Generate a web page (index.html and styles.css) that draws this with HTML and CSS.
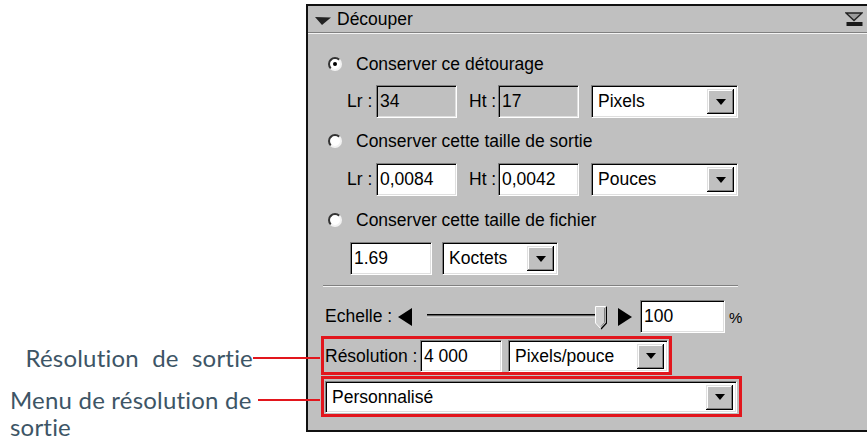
FILE: index.html
```html
<!DOCTYPE html>
<html lang="fr">
<head>
<meta charset="utf-8">
<title>Découper</title>
<link rel="stylesheet" href="styles.css">
</head>
<body>
<div class="page">
  <aside class="callouts">
    <div class="callout callout-res">
      <span class="callout-text">Résolution de sortie</span>
      <span class="callout-line"></span>
    </div>
    <div class="callout callout-menu">
      <span class="callout-text">Menu de résolution de<br>sortie</span>
      <span class="callout-line"></span>
    </div>
  </aside>

  <section class="panel">
    <header class="panel-head">
      <svg class="head-tri" width="16" height="8" viewBox="0 0 16 8"><polygon points="0,0 16,0.5 7,8" fill="#222"/></svg>
      <span class="head-title">Découper</span>
      <svg class="head-menu" width="18" height="15" viewBox="0 0 18 15">
        <path d="M1 1 H17 L9 8.5 Z" fill="#9a9a9a" stroke="#222" stroke-width="1.4" stroke-linejoin="miter"/>
        <rect x="1.5" y="10" width="16" height="4" fill="#1a1a1a"/>
      </svg>
    </header>

    <div class="panel-body">
      <div class="radio-row r1"><span class="radio checked"></span><span>Conserver ce détourage</span></div>
      <div class="field-row f1">
        <span class="flabel">Lr :</span><span class="input disabled w81">34</span>
        <span class="flabel ht">Ht :</span><span class="input disabled w81">17</span>
        <span class="select sel-unit"><span class="sel-text">Pixels</span><span class="sel-btn"></span></span>
      </div>

      <div class="radio-row r2"><span class="radio"></span><span>Conserver cette taille de sortie</span></div>
      <div class="field-row f2">
        <span class="flabel">Lr :</span><span class="input w81">0,0084</span>
        <span class="flabel ht">Ht :</span><span class="input w81">0,0042</span>
        <span class="select sel-unit"><span class="sel-text">Pouces</span><span class="sel-btn"></span></span>
      </div>

      <div class="radio-row r3"><span class="radio"></span><span>Conserver cette taille de fichier</span></div>
      <div class="field-row f3">
        <span class="input w82">1.69</span>
        <span class="select sel-size"><span class="sel-text">Koctets</span><span class="sel-btn"></span></span>
      </div>
    </div>

    <div class="separator"></div>

    <div class="panel-lower">
      <div class="scale-row">
        <span class="scale-label">Echelle :</span>
        <svg class="arrow-left" width="14" height="18" viewBox="0 0 14 18"><polygon points="14,0 14,18 0,9" fill="#000"/></svg>
        <svg class="slider" width="180" height="24" viewBox="0 0 180 24">
          <rect x="0" y="8" width="172" height="1" fill="#000"/>
          <rect x="0" y="9" width="172" height="1.5" fill="#606060"/>
          <rect x="0" y="10.5" width="172" height="1" fill="#e8e8e8"/>
          <polygon points="168.5,0.5 179.5,0.5 179.5,17 174,23 168.5,17" fill="#d0d0d0" stroke="#fff" stroke-width="1"/>
          <polyline points="179.5,0.5 179.5,17 174,23" fill="none" stroke="#000" stroke-width="1.3"/>
          <polyline points="177.5,2 177.5,16.5 174,20.5" fill="none" stroke="#808080" stroke-width="1"/>
        </svg>
        <svg class="arrow-right" width="14" height="18" viewBox="0 0 14 18"><polygon points="0,0 0,18 14,9" fill="#000"/></svg>
        <span class="input w85">100</span>
        <span class="pct">%</span>
      </div>

      <div class="redbox rb1">
        <span class="flabel res">Résolution :</span>
        <span class="input w82">4 000</span>
        <span class="select sel-res"><span class="sel-text">Pixels/pouce</span><span class="sel-btn"></span></span>
      </div>

      <div class="redbox rb2">
        <span class="select sel-menu"><span class="sel-text">Personnalisé</span><span class="sel-btn"></span></span>
      </div>
    </div>
  </section>
</div>
</body>
</html>
```

FILE: styles.css
```css
* { box-sizing: border-box; }

body {
  margin: 0;
  background: #ffffff;
  font-family: "Liberation Sans", Arial, sans-serif;
  font-size: 17.5px;
  color: #000;
}

.page {
  display: flex;
  width: 867px;
  height: 446px;
  overflow: hidden;
}

/* ---------- callouts ---------- */
.callouts {
  width: 306px;
  flex: none;
  display: flex;
  flex-direction: column;
  position: relative;
  z-index: 2;
  font-family: "Lato", "Open Sans", sans-serif;
  font-size: 24px;
  letter-spacing: 0.2px;
  line-height: 27px;
  color: #3d5566;
}

.callout {
  display: flex;
  margin-right: -14px;
}

.callout-line {
  height: 2px;
  background: #e2161d;
  flex: none;
}

.callout-res {
  margin-top: 344px;
  align-items: center;
  justify-content: flex-end;
  word-spacing: 7px;
}

.callout-res .callout-line { width: 67px; }

.callout-menu {
  margin-top: 15px;
  align-items: flex-start;
  justify-content: space-between;
  padding-left: 10px;
}

.callout-menu .callout-line {
  width: 62px;
  margin-top: 13px;
}

/* ---------- panel ---------- */
.panel {
  flex: 1;
  margin-top: 4px;
  height: 428px;
  background: #c0c0c0;
  border: 2px solid #111;
  border-right: none;
  display: flex;
  flex-direction: column;
}

.panel-head {
  height: 27px;
  display: flex;
  align-items: center;
  padding: 1px 4px 0 7px;
  border-bottom: 1px solid #808080;
  box-shadow: 0 1px 0 #f4f4f4;
}

.head-tri { margin-top: 2px; }

.head-title {
  margin-left: 6px;
}

.head-menu { margin-left: auto; }

.panel-body {
  padding-left: 20px;
  display: flex;
  flex-direction: column;
}

.radio-row {
  height: 20px;
  display: flex;
  align-items: center;
  gap: 14px;
}

.r1 { margin-top: 21px; }
.r2 { margin-top: 13px; }
.r3 { margin-top: 14px; }

.radio {
  width: 14px;
  height: 14px;
  border-radius: 50%;
  background: #fff;
  border: 2px solid;
  border-color: #333 #f2f2f2 #f2f2f2 #333;
  display: flex;
  align-items: center;
  justify-content: center;
  flex: none;
}

.radio.checked::after {
  content: "";
  width: 4px;
  height: 4px;
  border-radius: 50%;
  background: #000;
}

.field-row {
  height: 33px;
  display: flex;
  align-items: stretch;
  margin-left: 19px;
}

.f1 { margin-top: 11px; }
.f2 { margin-top: 12px; }
.f3 { margin-top: 12px; margin-left: 22px; }

.flabel {
  width: 29px;
  flex: none;
  display: flex;
  align-items: center;
}

.flabel.ht { margin-left: 12px; }

/* sunken controls */
.input,
.select {
  background: #fff;
  border: 1px solid;
  border-color: #808080 #fff #fff #808080;
  box-shadow: inset 1px 1px 0 #000, inset -1px -1px 0 #dfdfdf;
  display: flex;
  align-items: center;
  flex: none;
  height: 33px;
}

.input { padding-left: 3px; }

.input.disabled { background: #c0c0c0; }

.w81 { width: 81px; }
.w82 { width: 82px; }
.w85 { width: 85px; }

.select { padding: 0 3px 0 6px; }

.sel-text { flex: 1; }

.sel-btn {
  width: 27px;
  height: 25px;
  background: #c0c0c0;
  box-shadow: inset -1px -1px 0 #000, inset 1px 1px 0 #dfdfdf, inset -2px -2px 0 #808080, inset 2px 2px 0 #fff;
  display: flex;
  align-items: center;
  justify-content: center;
  flex: none;
}

.sel-btn::after {
  content: "";
  border-left: 5px solid transparent;
  border-right: 5px solid transparent;
  border-top: 6px solid #000;
}

.sel-unit { width: 147px; margin-left: 12px; }
.sel-size { width: 116px; margin-left: 10px; }
.sel-res { width: 160px; margin-left: 6px; }
.sel-menu { width: 412px; height: 32px; }

/* ---------- separator ---------- */
.separator {
  margin: 10px 129px 0 15px;
  border-top: 1px solid #808080;
  border-bottom: 1px solid #f4f4f4;
}

/* ---------- lower ---------- */
.panel-lower {
  padding-left: 13px;
  display: flex;
  flex-direction: column;
  align-items: flex-start;
}

.scale-row {
  margin-top: 13px;
  margin-left: 4px;
  height: 33px;
  display: flex;
  align-items: center;
}

.scale-label { width: 73px; flex: none; }

.arrow-left { flex: none; }
.slider { flex: none; margin-left: 15px; margin-top: 2px; }
.arrow-right { flex: none; margin-left: 11px; }
.scale-row .input { margin-left: 8px; }

.pct {
  margin-left: 4px;
  font-size: 15px;
  margin-top: 1px;
}

.redbox {
  border: 3px solid #e2161d;
  display: flex;
  align-items: flex-start;
}

.rb1 {
  margin-top: 3px;
  height: 39px;
  padding: 1px 1px 0 1px;
}

.rb1 .input { height: 32px; }
.rb1 .select { height: 32px; }

.flabel.res {
  width: 95px;
  height: 32px;
}

.rb2 {
  margin-top: 1px;
  height: 41px;
  padding: 2px 2px 0 1px;
}
```
